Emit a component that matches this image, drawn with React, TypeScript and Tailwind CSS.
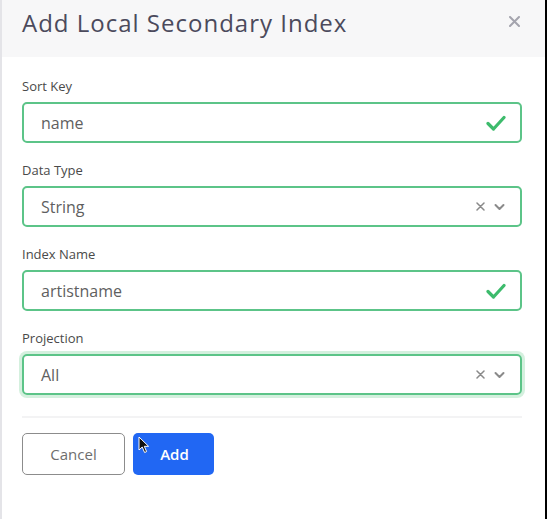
import React from 'react';

// Modal: add a local secondary index to a table.

type Field = { label: string; value: string; kind: 'input' | 'select'; focused?: boolean };

const fields: Field[] = [
  { label: 'Sort Key', value: 'name', kind: 'input' },
  { label: 'Data Type', value: 'String', kind: 'select' },
  { label: 'Index Name', value: 'artistname', kind: 'input' },
  { label: 'Projection', value: 'All', kind: 'select', focused: true },
];

function Check() {
  return (
    <svg width="20" height="16" viewBox="0 0 20 16" fill="none">
      <path d="M2 8.5 L7.5 14 L18 2.5" stroke="#3dbb6c" strokeWidth="3.2" strokeLinecap="round" strokeLinejoin="round" />
    </svg>
  );
}

function SelectIcons() {
  return (
    <div className="flex items-center gap-[9px] pr-[1px]">
      <svg width="9" height="9" viewBox="0 0 9 9">
        <path d="M1 1 L8 8 M8 1 L1 8" stroke="#8a8a8a" strokeWidth="1.5" strokeLinecap="round" />
      </svg>
      <svg width="11" height="8" viewBox="0 0 11 8">
        <path d="M1.5 2 L5.5 6 L9.5 2" stroke="#8a8a8a" strokeWidth="2" strokeLinecap="round" strokeLinejoin="round" fill="none" />
      </svg>
    </div>
  );
}

export default function App() {
  return (
    <div
      className="flex h-[519px] w-[547px] bg-black"
      style={{ fontFamily: '"Open Sans", "Liberation Sans", sans-serif' }}
    >
      <div className="flex w-[545px] flex-col border-l-2 border-[#e4e4e8] bg-white">
        <div className="flex h-[57px] items-start justify-between bg-[#f7f7f8] pl-[20px] pr-[25px] pt-[9px]">
          <h1 className="text-[24px] leading-[28px] tracking-[1px] text-[#4b4a5c]">Add Local Secondary Index</h1>
          <svg width="11" height="11" viewBox="0 0 11 11" className="mt-[7px]">
            <path d="M1 1 L10 10 M10 1 L1 10" stroke="#a4a4ae" strokeWidth="2" strokeLinecap="round" />
          </svg>
        </div>

        <div className="flex flex-col px-[20px] pt-[20px]">
          {fields.map(f => (
            <div key={f.label} className="mb-[18px] flex flex-col">
              <label className="mb-[7px] text-[13px] leading-[18px] text-[#4a4a4a]">{f.label}</label>
              <div
                className={`flex h-[41px] w-[500px] items-center justify-between rounded-[5px] border-2 border-[#5cc488] pl-[17px] pr-[14px] ${
                  f.focused ? 'shadow-[0_0_0_3px_#d4f0de]' : ''
                }`}
              >
                <span className="text-[16px] text-[#5f5f5f]">{f.value}</span>
                {f.kind === 'input' ? <Check /> : <SelectIcons />}
              </div>
            </div>
          ))}

          <div className="mt-[3px] h-[2px] w-[500px] bg-[#f3f3f4]" />

          <div className="mt-[15px] flex gap-[8px]">
            <button className="h-[42px] w-[103px] rounded-[5px] border border-[#8c8c8c] text-[15px] text-[#6e6e6e]">
              Cancel
            </button>
            <div className="relative">
              <button className="h-[42px] w-[81px] rounded-[5px] bg-[#2167f3] pl-[2px] text-[15px] font-semibold text-white">
                Add
              </button>
              <svg width="12" height="18" viewBox="0 0 12 18" className="absolute left-[5px] top-[3px]">
                <path d="M1 1 L1 14 L4.2 11 L6.6 16.5 L8.6 15.6 L6.3 10.3 L10.6 10.3 Z" fill="#111" stroke="#fff" strokeWidth="1" />
              </svg>
            </div>
          </div>
        </div>
      </div>
    </div>
  );
}
